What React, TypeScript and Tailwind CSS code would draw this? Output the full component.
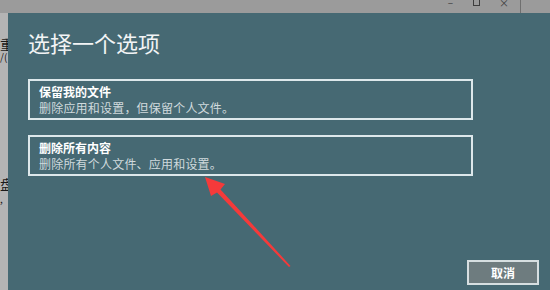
const cjk = { fontFamily: '"Microsoft YaHei", "Noto Sans CJK SC", "Noto Sans", sans-serif' };

const options = [
  { title: "保留我的文件", desc: "删除应用和设置，但保留个人文件。" },
  { title: "删除所有内容", desc: "删除所有个人文件、应用和设置。" },
];

const App = () => {
  return (
    <div className="relative w-[550px] h-[290px] overflow-hidden bg-[#a3a3a3] flex flex-col" style={cjk}>
      {/* window frame behind the dialog */}
      <div className="h-[13px] bg-[#9b9b9b] flex items-start justify-end pr-[29px] overflow-hidden text-[#3d3d3d]">
        <span className="text-[10px] leading-none -mt-[3px] mr-[20px]">–</span>
        <span className="w-[7px] h-[6px] border border-[#3d3d3d] border-t-0 mr-[19px]" />
        <span className="text-[10px] leading-none -mt-[2px] mr-[11px]">×</span>
        <span className="w-px h-[13px] bg-[#6f6f6f]" />
      </div>

      <div className="flex flex-1">
        <div className="w-[8px] bg-[#b4b4b4] overflow-hidden flex flex-col text-[#1a1a1a] text-[14px] leading-none">
          <span className="mt-[24px] whitespace-nowrap">重</span>
          <span className="mt-[1px] text-[10px] whitespace-nowrap">/(</span>
          <span className="mt-[115px] whitespace-nowrap">盘</span>
          <span className="mt-[3px] text-[10px] whitespace-nowrap">,</span>
        </div>

        {/* dialog */}
        <div className="flex-1 bg-[#466973] flex flex-col pl-[20px] pt-[14px]">
          <h1 className="text-[22px] leading-[30px] text-[#f2f4f5] font-normal">选择一个选项</h1>

          {options.map((o, i) => (
            <div
              key={o.title}
              className={`w-[445px] h-[41px] border-2 border-[#dde8eb] pl-[9px] pt-[3px] ${i === 0 ? "mt-[22px]" : "mt-[15px]"}`}
            >
              <div className="text-[12px] leading-[15px] font-bold text-white">{o.title}</div>
              <div className="text-[12px] leading-[16px] mt-[1px] text-[#d0dadd] tracking-[0.2px]">{o.desc}</div>
            </div>
          ))}

          <div className="flex-1" />
          <div className="flex justify-end pr-[11px] pb-[5px]">
            <button className="w-[72px] h-[25px] bg-[#6e7c7f] border-2 border-[#d7dfe1] text-[12px] font-bold text-white leading-none">
              取消
            </button>
          </div>
        </div>
      </div>

      {/* red annotation arrow */}
      <svg className="absolute inset-0 pointer-events-none" width="550" height="290" viewBox="0 0 550 290">
        <polygon
          points="205,177 225,184 220.5,189.5 290.5,266 289,267 217,192.5 211,196"
          fill="#f53a3a"
        />
      </svg>
    </div>
  );
};

export default App;
